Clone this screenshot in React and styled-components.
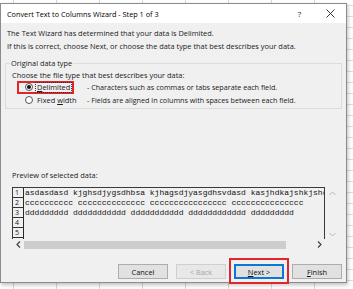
import React from "react"
import styled, { createGlobalStyle } from "styled-components"

const GlobalStyle = createGlobalStyle`
  html, body {
    margin: 0;
    padding: 0;
  }
  body {
    width: 353px;
    height: 289px;
    overflow: hidden;
    background-color: #ffffff;
    background-image:
      linear-gradient(to right, #d6d6d6 1px, transparent 1px),
      linear-gradient(to bottom, #dedede 1px, transparent 1px);
    background-size: 43px 100%, 100% 11px;
    background-position: 13px 0, 0 5px;
    font-family: "Open Sans", "Noto Sans", sans-serif;
  }
  #root {
    padding-top: 3px;
  }
`

const previewRows = [
    "asdasdasd kjghsdjygsdhbsa kjhagsdjyasgdhsvdasd kasjhdkajshkjshd",
    "cccccccccc cccccccccccccc cccccccccccccccc ccccccccccccccc",
    "ddddddddd ddddddddddd ddddddddddd dddddddddddd ddddddddd",
    "",
    "",
]

export default function App() {
    return (
        <>
            <GlobalStyle />
            <Dialog>
                <TitleBar>
                    <Title>Convert Text to Columns Wizard - Step 1 of 3</Title>
                    <TitleButton>?</TitleButton>
                    <TitleButton>
                        <svg width="9" height="9" viewBox="0 0 9 9">
                            <path d="M0.5 0.5 L8.5 8.5 M8.5 0.5 L0.5 8.5" stroke="#222" strokeWidth="0.9" fill="none" />
                        </svg>
                    </TitleButton>
                </TitleBar>

                <Body>
                    <IntroLine>The Text Wizard has determined that your data is Delimited.</IntroLine>
                    <IntroLine>If this is correct, choose Next, or choose the data type that best describes your data.</IntroLine>

                    <GroupBox>
                        <Legend>Original data type</Legend>
                        <Hint>Choose the file type that best describes your data:</Hint>
                        <OptionRow>
                            <OptionChoice $highlight>
                                <Radio $checked />
                                <OptionLabel $focused><u>D</u>elimited</OptionLabel>
                            </OptionChoice>
                            <Description>- Characters such as commas or tabs separate each field.</Description>
                        </OptionRow>
                        <OptionRow>
                            <OptionChoice>
                                <Radio />
                                <OptionLabel>Fixed <u>w</u>idth</OptionLabel>
                            </OptionChoice>
                            <Description>- Fields are aligned in columns with spaces between each field.</Description>
                        </OptionRow>
                    </GroupBox>

                    <PreviewLabel>Preview of selected data:</PreviewLabel>
                    <Preview>
                        <PreviewArea>
                            <LineNumbers>
                                {previewRows.map((_, idx) => <LineNumber key={idx}>{idx + 1}</LineNumber>)}
                            </LineNumbers>
                            <PreviewText>
                                {previewRows.map((row, idx) => <PreviewRow key={idx}>{row}</PreviewRow>)}
                            </PreviewText>
                        </PreviewArea>
                        <VScroll>
                            <svg width="7" height="5" viewBox="0 0 7 5">
                                <path d="M0.5 4 L3.5 1 L6.5 4" stroke="#b5b5b5" strokeWidth="1" fill="none" />
                            </svg>
                            <svg width="7" height="5" viewBox="0 0 7 5">
                                <path d="M0.5 1 L3.5 4 L6.5 1" stroke="#b5b5b5" strokeWidth="1" fill="none" />
                            </svg>
                        </VScroll>
                        <HScroll>
                            <ScrollArrow>
                                <svg width="5" height="7" viewBox="0 0 5 7">
                                    <path d="M4 0.5 L1 3.5 L4 6.5" stroke="#404040" strokeWidth="1.2" fill="none" />
                                </svg>
                            </ScrollArrow>
                            <ScrollTrack>
                                <ScrollThumb />
                            </ScrollTrack>
                            <ScrollArrow>
                                <svg width="5" height="7" viewBox="0 0 5 7">
                                    <path d="M1 0.5 L4 3.5 L1 6.5" stroke="#404040" strokeWidth="1.2" fill="none" />
                                </svg>
                            </ScrollArrow>
                        </HScroll>
                    </Preview>

                    <Footer>
                        <Button>Cancel</Button>
                        <Button disabled>&lt; Back</Button>
                        <Highlight>
                            <Button $default><u>N</u>ext &gt;</Button>
                        </Highlight>
                        <Button><u>F</u>inish</Button>
                    </Footer>
                </Body>
            </Dialog>
        </>
    )
}

const Dialog = styled.div`
    width: 345px;
    height: 278px;
    border: 1px solid #8c8c8c;
    background: #f0f0f0;
    box-shadow: 1px 2px 4px rgba(0, 0, 0, 0.25);
    display: flex;
    flex-direction: column;
    color: #1a1a1a;
    font-size: 7.4px;
`

const TitleBar = styled.div`
    height: 19px;
    background: #ffffff;
    display: flex;
    align-items: center;
    padding-left: 6px;
`

const Title = styled.div`
    flex: 1;
    font-size: 7.3px;
    color: #000;
`

const TitleButton = styled.div`
    width: 31px;
    height: 19px;
    display: flex;
    align-items: center;
    justify-content: center;
    font-size: 8px;
    color: #222;
`

const Body = styled.div`
    flex: 1;
    display: flex;
    flex-direction: column;
    padding: 4px 4px 0 4px;
`

const IntroLine = styled.div`
    padding-left: 2px;
    line-height: 12.5px;
    white-space: nowrap;
`

const GroupBox = styled.fieldset`
    margin: 6px 0 0 0;
    padding: 0 0 1px 4px;
    border: 1px solid #dcdcdc;
    min-width: 0;
`

const Legend = styled.legend`
    padding: 0 1px;
    line-height: 10px;
`

const Hint = styled.div`
    margin: 2px 0 0 2px;
    line-height: 10.5px;
`

const OptionRow = styled.div`
    display: flex;
    align-items: center;
    height: 13px;
`

const OptionChoice = styled.div`
    box-sizing: border-box;
    width: 57px;
    height: 13px;
    margin-left: 7px;
    padding-left: 6px;
    display: flex;
    align-items: center;
    border: 2px solid ${p => p.$highlight ? "#e0262b" : "transparent"};
`

const Radio = styled.span`
    box-sizing: border-box;
    flex-shrink: 0;
    width: 8px;
    height: 8px;
    border-radius: 50%;
    border: 1px solid #555;
    background: #fff;
    display: flex;
    align-items: center;
    justify-content: center;

    &::after {
        content: "";
        width: 4px;
        height: 4px;
        border-radius: 50%;
        background: ${p => p.$checked ? "#111" : "transparent"};
    }
`

const OptionLabel = styled.span`
    margin-left: 2px;
    padding: 0 1px;
    line-height: 9px;
    white-space: nowrap;
    border: 1px dotted ${p => p.$focused ? "#333" : "transparent"};
`

const Description = styled.span`
    margin-left: 13px;
    font-size: 7.2px;
    white-space: nowrap;
`

const PreviewLabel = styled.div`
    margin: auto 0 0 7px;
    line-height: 10px;
`

const Preview = styled.div`
    margin: 7px 5px 0 7px;
    display: grid;
    grid-template-columns: 1fr 12px;
    grid-template-rows: 52px 11px;
`

const PreviewArea = styled.div`
    border: 1px solid #3a3a3a;
    border-bottom: none;
    display: flex;
    overflow: hidden;
`

const LineNumbers = styled.div`
    width: 10px;
    flex-shrink: 0;
    border-right: 1px solid #2a2a2a;
`

const LineNumber = styled.div`
    box-sizing: border-box;
    height: 10px;
    line-height: 9px;
    font-size: 7px;
    padding-left: 2px;
    border-bottom: 1px solid #333;
`

const PreviewText = styled.div`
    flex: 1;
    overflow: hidden;
    padding-left: 1px;
`

const PreviewRow = styled.div`
    height: 10px;
    line-height: 10px;
    font-family: "Liberation Mono", "Courier New", monospace;
    font-size: 8px;
    white-space: pre;
    color: #111;
`

const VScroll = styled.div`
    display: flex;
    flex-direction: column;
    justify-content: space-between;
    align-items: center;
    padding: 4px 0 2px 3px;
`

const HScroll = styled.div`
    display: flex;
    align-items: center;
`

const ScrollArrow = styled.div`
    width: 12px;
    height: 11px;
    display: flex;
    align-items: center;
    justify-content: center;
`

const ScrollTrack = styled.div`
    flex: 1;
    height: 8px;
    display: flex;
`

const ScrollThumb = styled.div`
    width: 262px;
    background: #cdcdcd;
`

const Footer = styled.div`
    display: flex;
    justify-content: flex-end;
    gap: 8px;
    padding: 14px 0 3px;
`

const Button = styled.button`
    box-sizing: border-box;
    width: 50px;
    height: 15px;
    padding: 0;
    font-family: "Open Sans", "Noto Sans", sans-serif;
    font-size: 7.4px;
    color: ${p => p.disabled ? "#a6a6a6" : "#111"};
    background: ${p => p.disabled ? "#e8e8e8" : "#e1e1e1"};
    border: 1px solid ${p => p.$default ? "#0a78d4" : p.disabled ? "#cfcfcf" : "#adadad"};
    box-shadow: ${p => p.$default ? "inset 0 0 0 1px #0a78d4" : "none"};
`

const Highlight = styled.div`
    margin: -6px -5px -5px -5px;
    padding: 4px 3px 3px 3px;
    border: 2px solid #e0262b;
    display: flex;
`
